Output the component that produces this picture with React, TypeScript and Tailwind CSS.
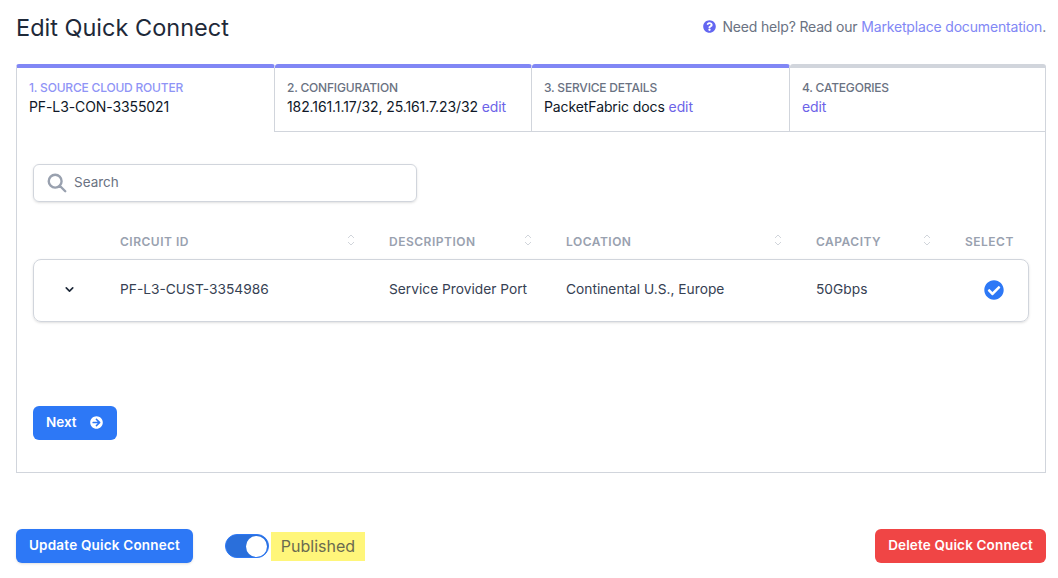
import { FaArrowCircleRight, FaCheckCircle, FaQuestionCircle } from 'react-icons/fa';
import { HiOutlineSearch } from 'react-icons/hi';
import { ChevronDown } from 'lucide-react';

const font = 'font-["Inter","Liberation_Sans",sans-serif]';

function Tab({ label, width, active, done = true, children }: { label: string; width: string; active?: boolean; done?: boolean; children: React.ReactNode }) {
  return (
    <div className={`${width} h-[68px] border-t-4 rounded-t-[3px] pr-3 pt-3 border-r border-r-gray-300 ${done ? 'border-t-[#8187f5]' : 'border-t-gray-300'} ${active ? 'pl-[12px] border-l border-l-gray-300' : 'pl-3 border-b border-b-gray-300'}`}>
      <div className={`text-xs font-medium leading-4 tracking-[-0.2px] ${active ? 'text-[#8f94f6]' : 'text-gray-500'}`}>{label}</div>
      <div className="text-sm leading-5 mt-[1px] text-gray-900 tracking-[-0.1px]">{children}</div>
    </div>
  );
}

function Edit() {
  return <span className="text-[#6c63e8]">edit</span>;
}

function SortIcon() {
  return (
    <svg width="8" height="12" viewBox="0 0 8 12" fill="none" stroke="#d1d5db" strokeWidth="1" className="mb-1">
      <path d="M1 4 L4 1 L7 4" />
      <path d="M1 8 L4 11 L7 8" />
    </svg>
  );
}

function HeadCell({ label, sort = true }: { label: string; sort?: boolean }) {
  return (
    <div className="flex items-center justify-between pr-[34px]">
      <span className="text-xs font-semibold text-gray-400 tracking-[0.5px]">{label}</span>
      {sort && <SortIcon />}
    </div>
  );
}

export default function App() {
  return (
    <div className={`${font} w-[1058px] h-[578px] bg-white pl-4 pr-3 overflow-hidden`}>
      {/* Title */}
      <div className="flex items-center justify-between h-[64px] pb-2">
        <h1 className="text-[23.5px] text-gray-800">Edit Quick Connect</h1>
        <div className="flex items-center gap-[6px] text-sm text-gray-500 tracking-[-0.17px] pb-[2px]">
          <FaQuestionCircle className="w-[13px] h-[13px] text-[#6366f1] mb-[1px]" />
          <span>
            Need help? Read our <span className="text-[#8187f5]">Marketplace documentation</span>.
          </span>
        </div>
      </div>

      {/* Steps */}
      <div className="flex">
        <Tab label="1. SOURCE CLOUD ROUTER" width="w-[259px]" active>
          PF-L3-CON-3355021
        </Tab>
        <Tab label="2. CONFIGURATION" width="w-[257px]">
          182.161.1.17/32, 25.161.7.23/32 <Edit />
        </Tab>
        <Tab label="3. SERVICE DETAILS" width="w-[258px]">
          PacketFabric docs <Edit />
        </Tab>
        <Tab label="4. CATEGORIES" width="w-[256px]" done={false}>
          <Edit />
        </Tab>
      </div>

      {/* Panel */}
      <div className="h-[341px] border-x border-b border-gray-300 px-4 pt-8">
        <div className="w-[384px] h-[38px] border border-gray-300 rounded-md shadow-sm flex items-center pl-[12px] gap-[6px]">
          <HiOutlineSearch className="w-[22px] h-[22px] text-gray-400 [stroke-width:2.6]" />
          <span className="text-[13.5px] text-gray-500 pb-[2px]">Search</span>
        </div>

        <div className="grid grid-cols-[87px_269px_177px_250px_149px_1fr] h-[57px] items-end pb-[9px]">
          <div />
          <HeadCell label="CIRCUIT ID" />
          <HeadCell label="DESCRIPTION" />
          <HeadCell label="LOCATION" />
          <HeadCell label="CAPACITY" />
          <span className="text-xs font-semibold text-gray-400 tracking-[0.5px]">SELECT</span>
        </div>

        <div className="grid grid-cols-[87px_269px_177px_250px_149px_1fr] items-center h-[63px] w-[996px] border border-gray-300 rounded-lg shadow-sm text-[13.75px] text-gray-700 pb-[2px]">
          <div className="flex justify-center pr-[17px]">
            <ChevronDown className="w-[13px] h-[13px] text-gray-800" strokeWidth={3} />
          </div>
          <span className="-ml-px">PF-L3-CUST-3354986</span>
          <span className="-ml-px whitespace-nowrap">Service Provider Port</span>
          <span className="-ml-px">Continental U.S., Europe</span>
          <span className="-ml-px">50Gbps</span>
          <div className="flex justify-end pr-[24px] mt-[1px]">
            <FaCheckCircle className="w-5 h-5 text-[#2d78f6]" />
          </div>
        </div>

        <button className="mt-[84px] w-[84px] h-[34px] bg-[#2d78f6] rounded-md text-white text-[13.5px] font-semibold flex items-center pl-[13px] gap-[13px] pb-[2px]">
          Next
          <FaArrowCircleRight className="w-[13px] h-[13px] mt-[1px]" />
        </button>
      </div>

      {/* Footer */}
      <div className="flex items-center justify-between mt-[56px]">
        <div className="flex items-center">
          <button className="w-[177px] h-[34px] bg-[#2d78f6] rounded-md text-white text-[13.5px] font-semibold tracking-[0.2px] shadow-sm pb-[2px]">
            Update Quick Connect
          </button>
          <div className="ml-8 w-[44px] h-6 rounded-full bg-[#2a6fdb] border border-[#2d78f6] flex items-center justify-end pr-[1px]">
            <div className="w-[21px] h-[21px] rounded-full bg-white" />
          </div>
          <span className="ml-[2px] w-[94px] h-[29px] bg-[#fff67a] text-[#6b6b50] text-base flex items-center justify-center pb-[1px]">
            Published
          </span>
        </div>
        <button className="w-[171px] h-[34px] bg-[#f04545] rounded-md text-white text-[13.5px] font-semibold tracking-[0.15px] pb-[2px]">
          Delete Quick Connect
        </button>
      </div>
    </div>
  );
}
